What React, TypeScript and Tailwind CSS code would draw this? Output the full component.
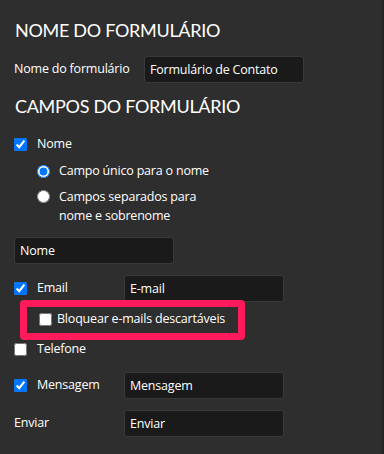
import React from "react";

const body = { fontFamily: '"Open Sans", "Noto Sans", sans-serif' };
const head = { fontFamily: 'Lato, "Open Sans", sans-serif' };

function Field({ value, className = "" }: { value: string; className?: string }) {
  return (
    <input
      readOnly
      defaultValue={value}
      className={`h-[27px] w-[160px] rounded-[3px] border border-[#3a3a3a] bg-[#1a1a1a] px-[5px] text-[12.5px] tracking-[-0.2px] text-white outline-none ${className}`}
    />
  );
}

function Check({ checked = false }: { checked?: boolean }) {
  return <input type="checkbox" readOnly checked={checked} className="h-[13px] w-[13px] shrink-0" />;
}

function Radio({ checked = false }: { checked?: boolean }) {
  return <input type="radio" name="nome" readOnly checked={checked} className="h-[13px] w-[13px] shrink-0" />;
}

export default function App() {
  return (
    <div
      className="h-[454px] w-[384px] overflow-hidden border-r-2 border-[#232323] bg-[#2e2e2e] pl-[14px] pt-[20px] text-[12.5px] tracking-[-0.2px] text-white"
      style={body}
    >
      {/* Nome do formulário */}
      <h2 className="h-[20px] pl-px text-[18px] leading-[20px] tracking-[-0.3px]" style={head}>
        NOME DO FORMULÁRIO
      </h2>
      <div className="mt-[16px] flex items-center">
        <span className="w-[130px]">Nome do formulário</span>
        <Field value="Formulário de Contato" />
      </div>

      {/* Campos */}
      <h2 className="mt-[13px] h-[20px] pl-px text-[18px] leading-[20px] tracking-[-0.3px]" style={head}>
        CAMPOS DO FORMULÁRIO
      </h2>

      <div className="mt-[18px] flex h-[20px] items-center gap-[10px]">
        <Check checked />
        <span>Nome</span>
      </div>
      <div className="ml-[23px] mt-[7px] flex h-[20px] items-center gap-[9px]">
        <Radio checked />
        <span>Campo único para o nome</span>
      </div>
      <div className="ml-[23px] mt-[6px] flex items-start gap-[9px]">
        <span className="flex h-[19px] items-center">
          <Radio />
        </span>
        <span className="w-[150px] leading-[19px]">Campos separados para nome e sobrenome</span>
      </div>
      <Field value="Nome" className="mt-[12px]" />

      <div className="mt-[11px] flex items-center">
        <div className="flex w-[110px] items-center gap-[10px]">
          <Check checked />
          <span>Email</span>
        </div>
        <Field value="E-mail" />
      </div>

      <div className="relative ml-[25px] mt-[7px] flex h-[20px] items-center gap-[5px]">
        <Check />
        <span>Bloquear e-mails descartáveis</span>
        <div className="pointer-events-none absolute left-[-19px] top-[-9px] h-[40px] w-[225px] rounded-[4px] border-[7px] border-[#ff1a5b]" />
      </div>

      <div className="mt-[10px] flex h-[20px] items-center gap-[10px]">
        <Check />
        <span>Telefone</span>
      </div>

      <div className="mt-[13px] flex items-center">
        <div className="flex w-[110px] items-center gap-[10px]">
          <Check checked />
          <span>Mensagem</span>
        </div>
        <Field value="Mensagem" />
      </div>

      <div className="mt-[11px] flex items-center">
        <span className="w-[110px]">Enviar</span>
        <Field value="Enviar" />
      </div>
    </div>
  );
}
